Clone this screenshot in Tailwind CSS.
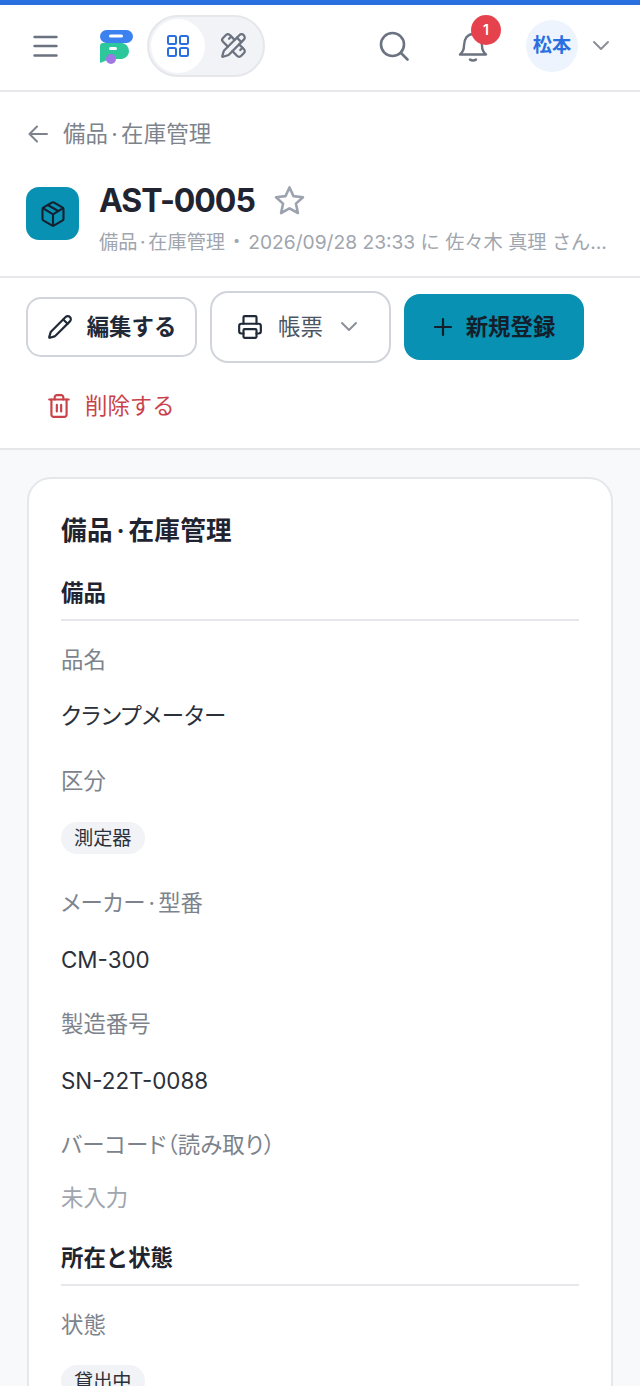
<!DOCTYPE html>
<html lang="ja">
<head>
    <meta charset="UTF-8">
    <meta name="viewport" content="width=device-width, initial-scale=1.0">
    <title>AST-0005</title>
    <script src="https://cdn.jsdelivr.net/npm/@tailwindcss/browser@4"></script>
</head>
<body class="bg-[#f8f9fb] text-[#1f2430] font-['Inter','Noto_Sans_CJK_JP',sans-serif] h-[1386px] overflow-hidden">

    <!-- Header -->
    <header class="h-[92px] bg-white border-t-[5px] border-b-2 border-t-[#2a6fe0] border-b-[#e5e7eb] flex items-center pl-[33px] pr-[30px] pb-[4px]">
        <svg class="w-[25px] h-[22px] text-[#6b7280]" viewBox="0 0 25 22" fill="none" stroke="currentColor" stroke-width="2.400" stroke-linecap="round"><path d="M1.500 2h22M1.500 11h22M1.500 20.500h22"/></svg>
        <svg class="w-[36px] h-[36px] ml-[41px]" viewBox="0 -2 36 36">
            <rect x="1" y="0" width="33" height="13" rx="6.500" fill="#3b82f0"/>
            <rect x="10" y="4.500" width="14" height="3" rx="1.500" fill="#fff"/>
            <path d="M1 16a3 3 0 0 1 3-3h19a8 8 0 0 1 7 8 8 8 0 0 1-7 8H11l-10 4z" fill="#2cc79b"/>
            <rect x="10" y="17" width="8" height="3" rx="1.500" fill="#fff"/>
            <circle cx="12" cy="29" r="5" fill="#a078e6"/>
        </svg>
        <div class="ml-[12px] w-[118px] h-[62px] rounded-full bg-[#f1f3f6] border-2 border-[#e5e7eb] flex items-center pl-[2px] shrink-0">
            <div class="w-[54px] h-[54px] rounded-full bg-white flex items-center justify-center">
                <svg class="w-[24px] h-[24px] text-[#2a6fe0]" viewBox="0 0 24 24" fill="none" stroke="currentColor" stroke-width="2"><rect x="2" y="2" width="8" height="8" rx="1.500"/><rect x="14" y="2" width="8" height="8" rx="1.500"/><rect x="2" y="14" width="8" height="8" rx="1.500"/><rect x="14" y="14" width="8" height="8" rx="1.500"/></svg>
            </div>
            <svg class="w-[27px] h-[27px] ml-[15px] text-[#6b7280]" viewBox="0 0 24 24" fill="none" stroke="currentColor" stroke-width="2" stroke-linecap="round" stroke-linejoin="round"><path d="M13 7 8.700 2.700a2.410 2.410 0 0 0-3.400 0L2.700 5.300a2.410 2.410 0 0 0 0 3.400L7 13"/><path d="m8 6 2-2"/><path d="m18 16 2-2"/><path d="m17 11 4.300 4.300c.94.94.94 2.460 0 3.400l-2.600 2.600c-.94.94-2.460.94-3.400 0L11 17"/><path d="M21.174 6.812a1 1 0 0 0-3.986-3.987L3.842 16.174a2 2 0 0 0-.5.83l-1.321 4.352a.5.5 0 0 0 .623.622l4.353-1.320a2 2 0 0 0 .83-.497z"/><path d="m15 5 4 4"/></svg>
        </div>
        <svg class="w-[30px] h-[30px] ml-auto text-[#6b7280]" viewBox="0 0 30 30" fill="none" stroke="currentColor" stroke-width="2.600" stroke-linecap="round"><circle cx="13.500" cy="13.500" r="11.500"/><path d="m22 22 6.500 6.500"/></svg>
        <div class="relative ml-[49px] w-[30px] h-[32px]">
            <svg class="w-[30px] h-[32px] text-[#6b7280]" viewBox="0 0 30 32" fill="none" stroke="currentColor" stroke-width="2.400" stroke-linecap="round" stroke-linejoin="round"><path d="M2 24.500c2.500-2 4-4 4-9C6 9 9.500 4 15 4s9 5 9 11.500c0 5 1.500 7 4 9z"/><path d="M12 29.500c1.500 1.300 4.500 1.300 6 0"/></svg>
            <span class="absolute -top-[15px] left-[13px] w-[30px] h-[30px] rounded-full bg-[#e5424d] text-white text-[14px] font-semibold flex items-center justify-center">1</span>
        </div>
        <div class="ml-[38px] w-[52px] h-[52px] rounded-full bg-[#edf4fe] text-[#2a6fe0] text-[19.200px] font-semibold flex items-center justify-center">松本</div>
        <svg class="w-[18px] h-[18px] ml-[14px] text-[#8b9099]" viewBox="0 0 18 18" fill="none" stroke="currentColor" stroke-width="2" stroke-linecap="round" stroke-linejoin="round"><path d="m2 5 7 7 7-7"/></svg>
    </header>

    <!-- Title block -->
    <section class="bg-white h-[186px] border-b-2 border-[#e5e7eb] pl-[27px] pr-[26px] pt-[28px]">
        <div class="flex items-center h-[28px]">
            <svg class="w-[22px] h-[22px] text-[#7d838c]" viewBox="0 0 22 22" fill="none" stroke="currentColor" stroke-width="2" stroke-linecap="round" stroke-linejoin="round"><path d="M20 11H3M10 3.500 2.500 11l7.500 7.500"/></svg>
            <span class="ml-[14px] text-[22.400px] text-[#7d838c] tracking-[.2px]">備品<span class="mx-[.14em]">·</span>在庫管理</span>
        </div>
        <div class="flex mt-[31px]">
            <div class="-ml-[1px] w-[53px] h-[53px] rounded-[13px] bg-[#0891b2] flex items-center justify-center mt-[8px] shrink-0">
                <svg class="w-[28px] h-[28px] text-[#17202e]" viewBox="0 0 24 24" fill="none" stroke="currentColor" stroke-width="1.800" stroke-linecap="round" stroke-linejoin="round"><path d="M11 21.730a2 2 0 0 0 2 0l7-4A2 2 0 0 0 21 16V8a2 2 0 0 0-1-1.730l-7-4a2 2 0 0 0-2 0l-7 4A2 2 0 0 0 3 8v8a2 2 0 0 0 1 1.730z"/><path d="M12 22V12"/><path d="m3.300 7 7.703 4.734a2 2 0 0 0 1.994 0L20.700 7"/><path d="m7.500 4.270 9 5.150"/></svg>
            </div>
            <div class="ml-[20px] min-w-0 flex-1">
                <div class="flex items-center h-[44px]">
                    <h1 class="text-[32px] font-bold tracking-[-1.050px]">AST-0005</h1>
                    <svg class="w-[33px] h-[33px] ml-[18px] -translate-y-[1px] text-[#9ca3af]" viewBox="0 0 24 24" fill="none" stroke="currentColor" stroke-width="1.900" stroke-linejoin="round"><path d="m12 2.500 2.900 6.300 6.900.8-5.100 4.700 1.400 6.800-6.100-3.400-6.100 3.400 1.400-6.800L2.200 9.600l6.900-.8z"/></svg>
                </div>
                <p class="text-[19.200px] leading-[28px] text-[#a0a5ae] truncate mt-[5px]">備品<span class="mx-[.14em]">·</span>在庫管理<span class="mx-[2px]">・</span>2026/09/28 23:33 に 佐々木 真理 さんが更新しました</p>
            </div>
        </div>
    </section>

    <!-- Actions -->
    <section class="bg-white h-[172px] border-b-2 border-[#e5e7eb] pl-[26px] pt-[13px]">
        <div class="flex items-center gap-[13px]">
            <button class="w-[171px] h-[60px] rounded-[15px] bg-white border-2 border-[#d1d5db] flex items-center justify-center text-[22.400px] font-semibold text-[#1f2937]">
                <svg class="w-[26px] h-[26px] mr-[14px]" viewBox="0 0 24 24" fill="none" stroke="currentColor" stroke-width="2" stroke-linecap="round" stroke-linejoin="round"><path d="M21.174 6.812a1 1 0 0 0-3.986-3.987L3.842 16.174a2 2 0 0 0-.5.83l-1.321 4.352a.5.5 0 0 0 .623.622l4.353-1.320a2 2 0 0 0 .83-.497z"/><path d="m15 5 4 4"/></svg>
                編集する
            </button>
            <button class="w-[181px] h-[72px] rounded-[18px] bg-white border-2 border-[#d1d5db] flex items-center pl-[25px] text-[22.400px] text-[#4b5563]">
                <svg class="w-[26px] h-[26px] mr-[15px] text-[#1f2937]" viewBox="0 0 24 24" fill="none" stroke="currentColor" stroke-width="2" stroke-linecap="round" stroke-linejoin="round"><path d="M6 18H4a2 2 0 0 1-2-2v-5a2 2 0 0 1 2-2h16a2 2 0 0 1 2 2v5a2 2 0 0 1-2 2h-2"/><path d="M6 9V3a1 1 0 0 1 1-1h10a1 1 0 0 1 1 1v6"/><rect x="6" y="14" width="12" height="8" rx="1"/></svg>
                帳票
                <svg class="w-[18px] h-[18px] ml-[17px] text-[#8b9099]" viewBox="0 0 18 18" fill="none" stroke="currentColor" stroke-width="2" stroke-linecap="round" stroke-linejoin="round"><path d="m2 5 7 7 7-7"/></svg>
            </button>
            <button class="w-[180px] h-[66px] rounded-[16px] bg-[#0891b2] flex items-center justify-center text-[22.400px] font-semibold text-[#13202c]">
                <svg class="w-[20px] h-[20px] mr-[13px]" viewBox="0 0 20 20" fill="none" stroke="currentColor" stroke-width="2.200" stroke-linecap="round"><path d="M10 2v16M2 10h16"/></svg>
                新規登録
            </button>
        </div>
        <button class="flex items-center ml-[20px] mt-[28px] h-[30px] text-[22.400px] text-[#c9424a]">
            <svg class="w-[26px] h-[26px] mr-[13px]" viewBox="0 0 24 24" fill="none" stroke="currentColor" stroke-width="2" stroke-linecap="round" stroke-linejoin="round"><path d="M3 6h18"/><path d="M19 6v14c0 1-1 2-2 2H7c-1 0-2-1-2-2V6"/><path d="M8 6V4c0-1 1-2 2-2h4c1 0 2 1 2 2v2"/><path d="M10 11v6M14 11v6"/></svg>
            削除する
        </button>
    </section>

    <!-- Detail card -->
    <main class="mx-[27px] mt-[27px] bg-white border-2 border-[#e5e7eb] rounded-[24px] px-[32px] pt-[30px] h-[1000px]">
        <h2 class="text-[25.600px] font-semibold leading-[44px] tracking-[.3px]">備品<span class="mx-[.14em]">·</span>在庫管理</h2>
        <h3 class="text-[22.400px] font-semibold leading-[32px] mt-[24px] pb-[10px] border-b-2 border-[#e5e7eb]">備品</h3>

        <p class="text-[22.400px] text-[#7d838c] leading-[32px] mt-[23px]">品名</p>
        <p class="text-[22.400px] text-[#2b303a] leading-[32px] mt-[24px] [font-feature-settings:'palt'] tracking-[.4px]">クランプメーター</p>

        <p class="text-[22.400px] text-[#7d838c] leading-[32px] mt-[33px]">区分</p>
        <span class="block w-fit text-[19.200px] text-[#2b303a] leading-[32px] px-[13px] rounded-full bg-[#f1f3f6] mt-[25px]">測定器</span>

        <p class="text-[22.400px] text-[#7d838c] leading-[32px] mt-[33px] [font-feature-settings:'palt']">メーカー<span class="mx-[.14em]">·</span>型番</p>
        <p class="text-[22.400px] text-[#2b303a] leading-[32px] mt-[25px]">CM-300</p>

        <p class="text-[22.400px] text-[#7d838c] leading-[32px] mt-[32px]">製造番号</p>
        <p class="text-[22.400px] text-[#2b303a] leading-[32px] mt-[25px]">SN-22T-0088</p>

        <p class="text-[22.400px] text-[#7d838c] leading-[32px] mt-[32px] [font-feature-settings:'palt'] tracking-[.2px]">バーコード（読み取り）</p>
        <p class="text-[22.400px] text-[#a0a5ae] leading-[32px] mt-[21px]">未入力</p>

        <h3 class="text-[22.400px] font-semibold leading-[32px] mt-[28px] pb-[10px] border-b-2 border-[#e5e7eb]">所在と状態</h3>

        <p class="text-[22.400px] text-[#7d838c] leading-[32px] mt-[23px]">状態</p>
        <span class="block w-fit text-[19.200px] text-[#2b303a] leading-[32px] px-[13px] rounded-full bg-[#f1f3f6] mt-[24px]">貸出中</span>
    </main>

</body>
</html>
